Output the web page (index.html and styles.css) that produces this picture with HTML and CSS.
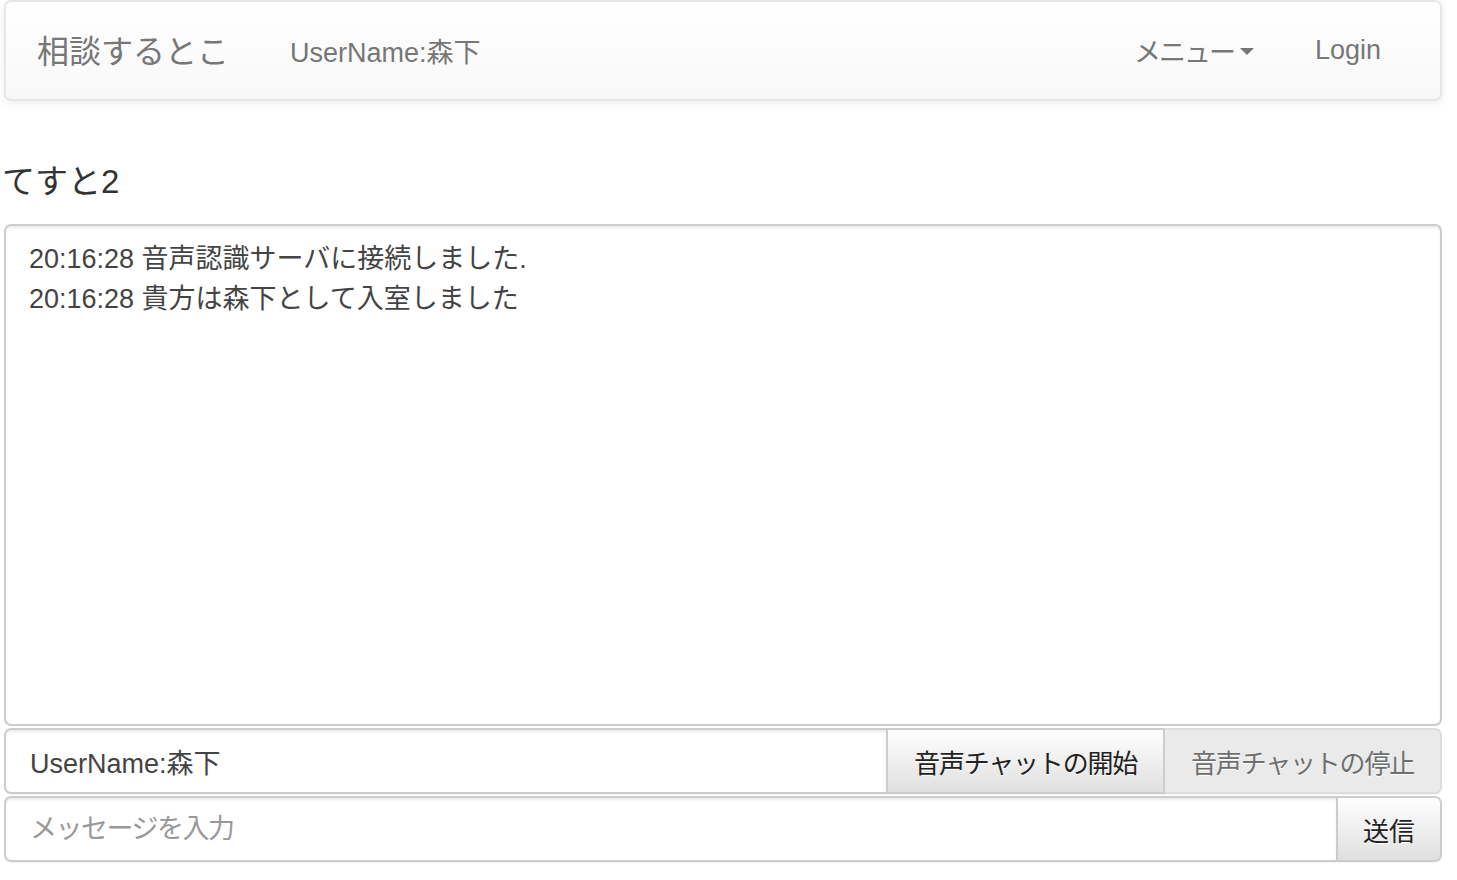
FILE: index.html
```html
<!DOCTYPE html>
<html lang="ja">
<head>
<meta charset="utf-8">
<title>相談するとこ</title>
<link rel="stylesheet" href="styles.css">
</head>
<body>
<div class="page">
  <nav class="navbar">
    <div class="nav-left">
      <span class="brand">相談するとこ</span>
      <span class="nav-text">UserName:森下</span>
    </div>
    <div class="nav-right">
      <span class="nav-link menu">メニュー<span class="caret"></span></span>
      <span class="nav-link login">Login</span>
    </div>
  </nav>
  <h3 class="room-title">てすと2</h3>
  <div class="chat-log">
    <div class="line">20:16:28 音声認識サーバに接続しました.</div>
    <div class="line">20:16:28 貴方は森下として入室しました</div>
  </div>
  <div class="input-group">
    <input class="form-control" type="text" value="UserName:森下">
    <button class="btn btn-wide">音声チャットの開始</button>
    <button class="btn btn-wide btn-last" disabled>音声チャットの停止</button>
  </div>
  <div class="input-group">
    <input class="form-control" type="text" placeholder="メッセージを入力">
    <button class="btn btn-last">送信</button>
  </div>
</div>
</body>
</html>
```
FILE: styles.css
```css
html, body {
  margin: 0;
  padding: 0;
  background: #fff;
}
body {
  font-family: "Liberation Sans", "Noto Sans CJK JP", sans-serif;
  color: #333;
}
.page {
  width: 1438px;
  margin-left: 4px;
}
.navbar {
  box-sizing: border-box;
  height: 101px;
  display: flex;
  align-items: center;
  justify-content: space-between;
  border: 2px solid #e7e7e7;
  border-radius: 7px;
  background: linear-gradient(to bottom, #ffffff 0%, #f8f8f8 100%);
  box-shadow: inset 0 2px 0 rgba(255,255,255,.15), 0 2px 8px rgba(0,0,0,.08);
  padding: 0 59px 0 31px;
}
.nav-left, .nav-right {
  display: flex;
  align-items: center;
}
.brand {
  font-size: 32px;
  color: #777;
  margin-right: 61px;
  margin-top: -3px;
}
.nav-text {
  font-size: 27px;
  color: #777;
}
.nav-link {
  font-size: 27px;
  color: #777;
  display: flex;
  align-items: center;
}
.menu {
  letter-spacing: -2px;
}
.caret {
  display: inline-block;
  width: 0;
  height: 0;
  margin-left: 6px;
  border-top: 7px solid #777;
  border-left: 7px solid transparent;
  border-right: 7px solid transparent;
  margin-top: 2px;
}
.login {
  margin-left: 61px;
}
.room-title {
  font-size: 33px;
  font-weight: normal;
  line-height: 36px;
  margin: 63px 0 24px -2px;
  color: #333;
}
.chat-log {
  box-sizing: border-box;
  height: 502px;
  border: 2px solid #ccc;
  border-radius: 7px;
  box-shadow: inset 0 2px 2px rgba(0,0,0,.075);
  padding: 13px 23px;
  font-size: 27px;
  line-height: 40px;
  color: #444;
  margin-bottom: 2px;
}
.input-group {
  display: flex;
  height: 66px;
  margin-bottom: 2px;
  box-shadow: 0 1px 1px rgba(0,0,0,.05);
  border-radius: 7px;
}
.form-control {
  flex: 1;
  min-width: 0;
  box-sizing: border-box;
  height: 66px;
  border: 2px solid #ccc;
  border-radius: 7px 0 0 7px;
  box-shadow: inset 0 2px 2px rgba(0,0,0,.075);
  padding: 0 24px;
  font-family: "Liberation Sans", "Noto Sans CJK JP", sans-serif;
  font-size: 27px;
  color: #444;
  outline: none;
  background: #fff;
}
.form-control::placeholder {
  color: #999;
  letter-spacing: -1.5px;
}
.btn {
  box-sizing: border-box;
  height: 66px;
  border: 2px solid #ccc;
  margin-left: -2px;
  padding: 0 25px;
  font-family: "Liberation Sans", "Noto Sans CJK JP", sans-serif;
  font-size: 26px;
  color: #222;
  background: linear-gradient(to bottom, #ffffff 0%, #e0e0e0 100%);
  text-shadow: 0 1px 0 #fff;
  white-space: nowrap;
  cursor: pointer;
}
.btn-wide {
  letter-spacing: -1.2px;
  padding: 0 26px;
}
.btn-last {
  border-radius: 0 7px 7px 0;
}
.btn[disabled] {
  background: #e0e0e0;
  opacity: .65;
  cursor: default;
}
```
